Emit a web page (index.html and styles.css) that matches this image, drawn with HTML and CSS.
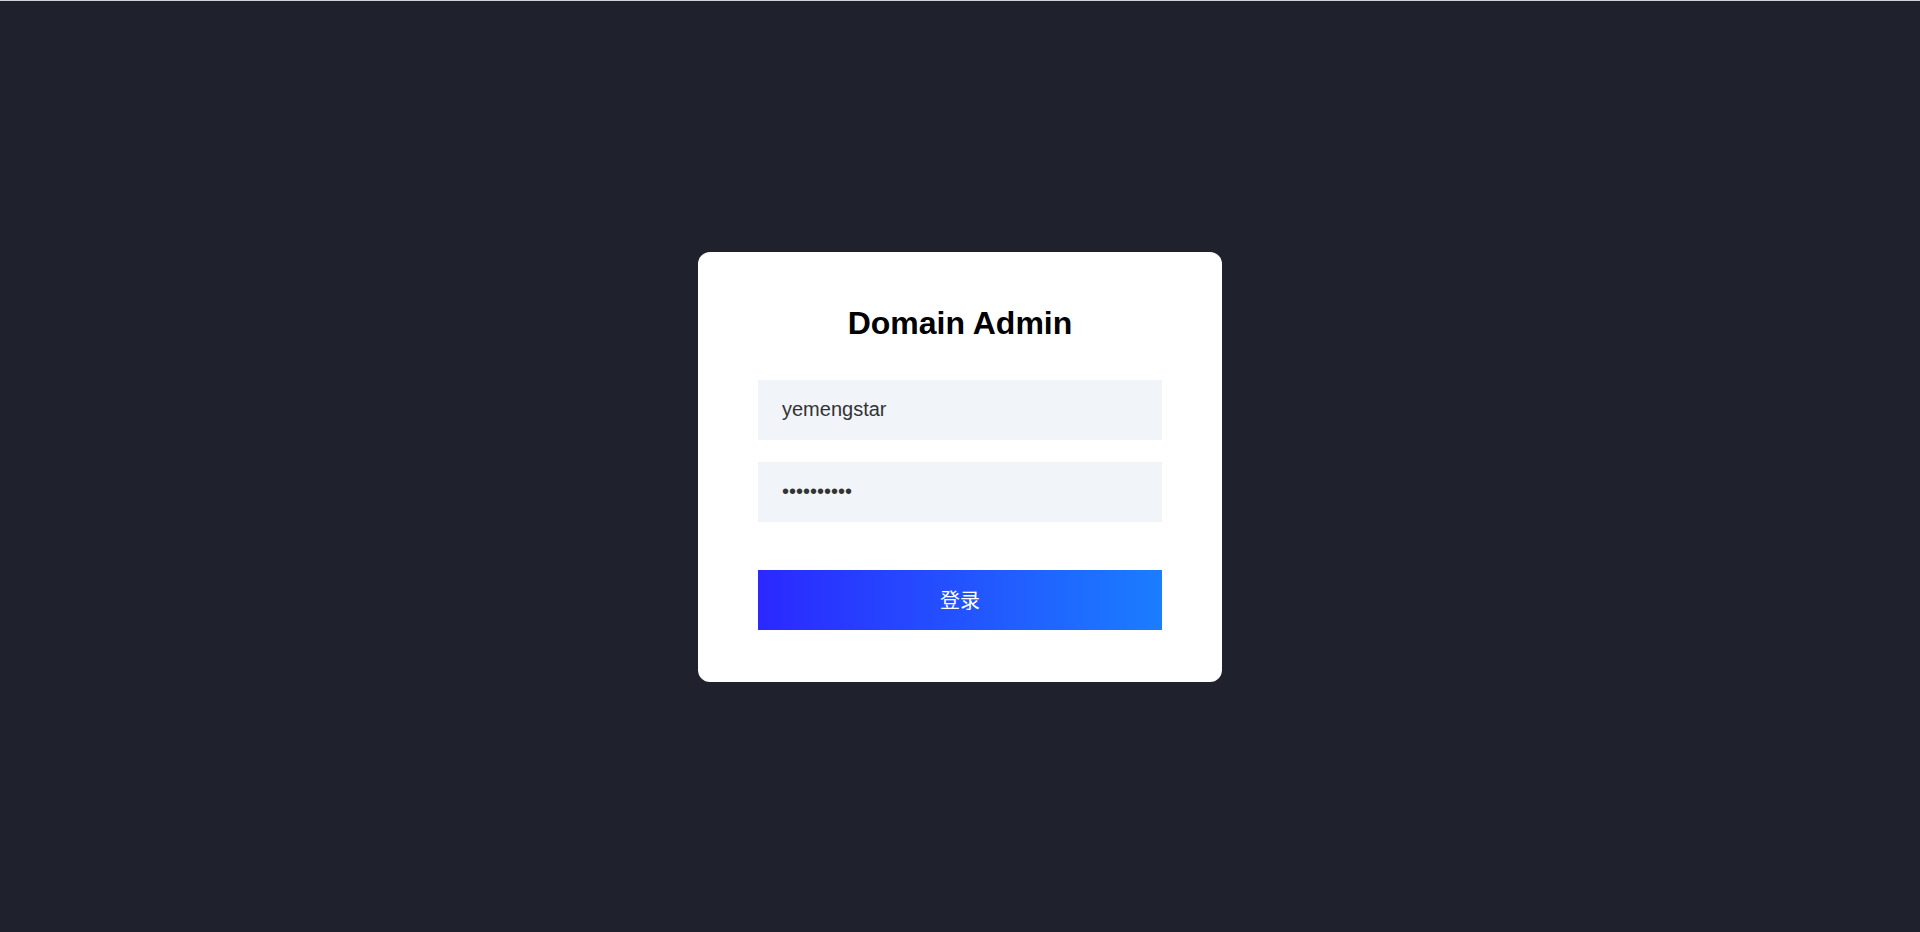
FILE: index.html
```html
<!DOCTYPE html>
<html lang="zh-CN">
<head>
<meta charset="utf-8">
<title>Domain Admin</title>
<link rel="stylesheet" href="styles.css">
</head>
<body>
<div class="topline"></div>
<main class="page">
  <form class="card" onsubmit="return false">
    <h1 class="title">Domain Admin</h1>
    <div class="fields">
      <input class="field" type="text" value="yemengstar">
      <input class="field" type="password" value="1234567890">
    </div>
    <button class="submit" type="submit">登录</button>
  </form>
</main>
</body>
</html>
```
FILE: styles.css
```css
html, body {
  margin: 0;
  padding: 0;
}
body {
  background: #1f222d;
  font-family: "Liberation Sans", Arial, "Noto Sans CJK SC", sans-serif;
  height: 932px;
  display: flex;
  flex-direction: column;
  overflow: hidden;
}
.topline {
  height: 1px;
  background: #d4d4d6;
  flex: none;
}
.page {
  flex: 1;
  display: flex;
  align-items: center;
  justify-content: center;
}
.card {
  width: 524px;
  box-sizing: border-box;
  background: #ffffff;
  border-radius: 12px;
  padding: 53px 60px 52px;
  display: flex;
  flex-direction: column;
}
.title {
  margin: 0 0 39px;
  font-size: 32px;
  line-height: 36px;
  font-weight: 700;
  color: #000;
  text-align: center;
}
.fields {
  display: flex;
  flex-direction: column;
  gap: 22px;
}
.field {
  display: block;
  height: 60px;
  box-sizing: border-box;
  border: none;
  outline: none;
  background: #f1f4f9;
  padding: 0 24px;
  font-family: "Liberation Sans", Arial, sans-serif;
  font-size: 20px;
  color: #333;
  margin: 0;
  width: 100%;
}
.submit {
  margin-top: 48px;
  height: 60px;
  border: none;
  padding: 0;
  background: linear-gradient(90deg, #2b28ff 0%, #1b7dff 100%);
  color: #fff;
  font-family: "Noto Sans CJK SC", "Liberation Sans", sans-serif;
  font-size: 20px;
  cursor: pointer;
}
```
